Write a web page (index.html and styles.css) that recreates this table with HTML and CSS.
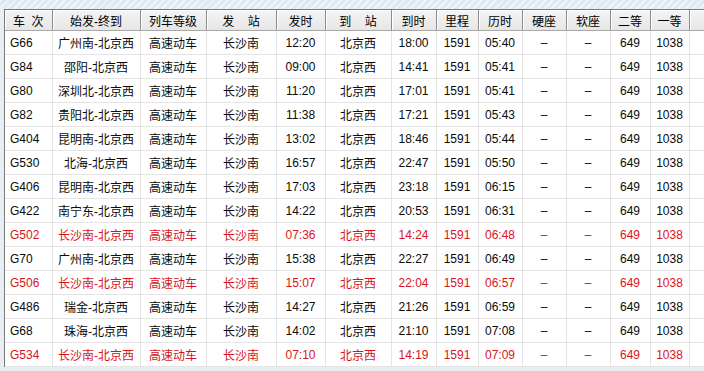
FILE: index.html
```html
<!DOCTYPE html>
<html lang="zh-CN">
<head>
<meta charset="utf-8">
<title>车次列表</title>
<link rel="stylesheet" href="styles.css">
</head>
<body>
<div class="frame">
<table class="grid">
<colgroup>
<col class="c1"><col class="c2"><col class="c3"><col class="c4"><col class="c5"><col class="c6"><col class="c7"><col class="c8"><col class="c9"><col class="c10"><col class="c11"><col class="c12"><col class="c13"><col class="c14">
</colgroup>
<thead>
<tr><th>车&nbsp;&nbsp;次</th><th>始发-终到</th><th>列车等级</th><th>发&nbsp;&nbsp;&nbsp;&nbsp;站</th><th>发时</th><th>到&nbsp;&nbsp;&nbsp;&nbsp;站</th><th>到时</th><th>里程</th><th>历时</th><th>硬座</th><th>软座</th><th>二等</th><th>一等</th><th></th></tr>
</thead>
<tbody>
<tr><td>G66</td><td>广州南-北京西</td><td>高速动车</td><td>长沙南</td><td>12:20</td><td>北京西</td><td>18:00</td><td>1591</td><td>05:40</td><td>–</td><td>–</td><td>649</td><td>1038</td><td></td></tr>
<tr><td>G84</td><td>邵阳-北京西</td><td>高速动车</td><td>长沙南</td><td>09:00</td><td>北京西</td><td>14:41</td><td>1591</td><td>05:41</td><td>–</td><td>–</td><td>649</td><td>1038</td><td></td></tr>
<tr><td>G80</td><td>深圳北-北京西</td><td>高速动车</td><td>长沙南</td><td>11:20</td><td>北京西</td><td>17:01</td><td>1591</td><td>05:41</td><td>–</td><td>–</td><td>649</td><td>1038</td><td></td></tr>
<tr><td>G82</td><td>贵阳北-北京西</td><td>高速动车</td><td>长沙南</td><td>11:38</td><td>北京西</td><td>17:21</td><td>1591</td><td>05:43</td><td>–</td><td>–</td><td>649</td><td>1038</td><td></td></tr>
<tr><td>G404</td><td>昆明南-北京西</td><td>高速动车</td><td>长沙南</td><td>13:02</td><td>北京西</td><td>18:46</td><td>1591</td><td>05:44</td><td>–</td><td>–</td><td>649</td><td>1038</td><td></td></tr>
<tr><td>G530</td><td>北海-北京西</td><td>高速动车</td><td>长沙南</td><td>16:57</td><td>北京西</td><td>22:47</td><td>1591</td><td>05:50</td><td>–</td><td>–</td><td>649</td><td>1038</td><td></td></tr>
<tr><td>G406</td><td>昆明南-北京西</td><td>高速动车</td><td>长沙南</td><td>17:03</td><td>北京西</td><td>23:18</td><td>1591</td><td>06:15</td><td>–</td><td>–</td><td>649</td><td>1038</td><td></td></tr>
<tr><td>G422</td><td>南宁东-北京西</td><td>高速动车</td><td>长沙南</td><td>14:22</td><td>北京西</td><td>20:53</td><td>1591</td><td>06:31</td><td>–</td><td>–</td><td>649</td><td>1038</td><td></td></tr>
<tr class="hot"><td>G502</td><td>长沙南-北京西</td><td>高速动车</td><td>长沙南</td><td>07:36</td><td>北京西</td><td>14:24</td><td>1591</td><td>06:48</td><td>–</td><td>–</td><td>649</td><td>1038</td><td></td></tr>
<tr><td>G70</td><td>广州南-北京西</td><td>高速动车</td><td>长沙南</td><td>15:38</td><td>北京西</td><td>22:27</td><td>1591</td><td>06:49</td><td>–</td><td>–</td><td>649</td><td>1038</td><td></td></tr>
<tr class="hot"><td>G506</td><td>长沙南-北京西</td><td>高速动车</td><td>长沙南</td><td>15:07</td><td>北京西</td><td>22:04</td><td>1591</td><td>06:57</td><td>–</td><td>–</td><td>649</td><td>1038</td><td></td></tr>
<tr><td>G486</td><td>瑞金-北京西</td><td>高速动车</td><td>长沙南</td><td>14:27</td><td>北京西</td><td>21:26</td><td>1591</td><td>06:59</td><td>–</td><td>–</td><td>649</td><td>1038</td><td></td></tr>
<tr><td>G68</td><td>珠海-北京西</td><td>高速动车</td><td>长沙南</td><td>14:02</td><td>北京西</td><td>21:10</td><td>1591</td><td>07:08</td><td>–</td><td>–</td><td>649</td><td>1038</td><td></td></tr>
<tr class="hot"><td>G534</td><td>长沙南-北京西</td><td>高速动车</td><td>长沙南</td><td>07:10</td><td>北京西</td><td>14:19</td><td>1591</td><td>07:09</td><td>–</td><td>–</td><td>649</td><td>1038</td><td></td></tr>
</tbody>
</table>
</div>
</body>
</html>
```
FILE: styles.css
```css
html, body {
  margin: 0;
  padding: 0;
}
body {
  width: 704px;
  height: 371px;
  overflow: hidden;
  background-color: #e9eef2;
  background-image:
    repeating-linear-gradient(135deg, rgba(255,255,255,0.55) 0 2px, rgba(255,255,255,0) 2px 5px),
    linear-gradient(180deg, #dbe8f2 0, #e3ecf3 9px, #e9eef2 9px);
  background-size: 100% 9px, 100% 100%;
  background-repeat: no-repeat;
  font-family: "Liberation Sans", Arial, "Noto Sans CJK SC", sans-serif;
  font-size: 12px;
  color: #0a0a0a;
}
.frame {
  margin: 9px 0 0 4px;
  border-top: 1px solid #7a7a7a;
  border-left: 1px solid #7a7a7a;
  background: #fff;
  width: 699px;
}
.grid {
  border-collapse: collapse;
  table-layout: fixed;
  width: 699px;
}
.c1 { width: 47px; }
.c2 { width: 88px; }
.c3 { width: 66px; }
.c4 { width: 70px; }
.c5 { width: 49px; }
.c6 { width: 66px; }
.c7 { width: 45px; }
.c8 { width: 42px; }
.c9 { width: 44px; }
.c10 { width: 44px; }
.c11 { width: 44px; }
.c12 { width: 40px; }
.c13 { width: 39px; }
.c14 { width: 15px; }
.grid th {
  height: 20px;
  padding: 0;
  font-weight: normal;
  font-size: 12px;
  text-align: center;
  background: linear-gradient(180deg, #f4f4f4, #e6e6e6);
  border-right: 1px solid #8c8c8c;
  border-bottom: 1px solid #a8a8a8;
  box-shadow: inset 1px 1px 0 #ffffff;
  color: #000;
  white-space: nowrap;
  overflow: hidden;
}
.grid td {
  height: 23px;
  padding: 0;
  text-align: center;
  border-right: 1px solid #e4e4e4;
  border-bottom: 1px solid #e4e4e4;
  white-space: nowrap;
  overflow: hidden;
  background: #fff;
}
.grid td:first-child {
  text-align: left;
  padding-left: 5px;
}
.grid tr.hot td {
  color: #d8141c;
}
```
